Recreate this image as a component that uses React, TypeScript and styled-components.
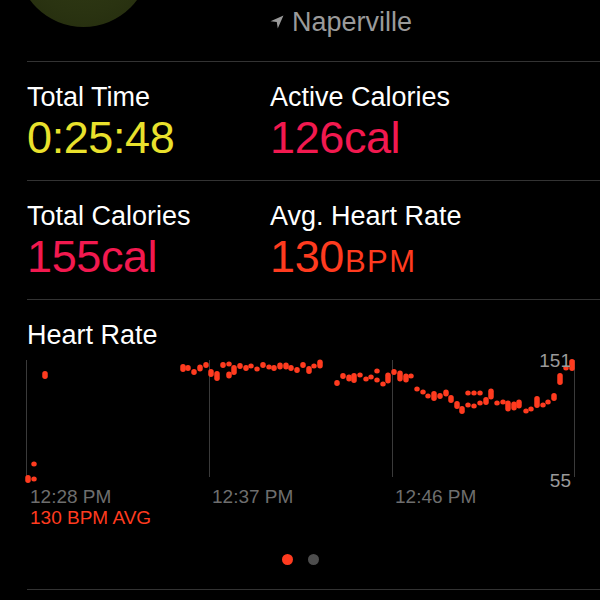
import React from "react";
import styled, { createGlobalStyle } from "styled-components";

const GlobalStyle = createGlobalStyle`
  html, body {
    margin: 0;
    padding: 0;
    background: #000;
  }
  body {
    font-family: "Liberation Sans", Arial, sans-serif;
  }
`;

const Screen = styled.div`
  width: 600px;
  height: 600px;
  overflow: hidden;
  background: #000;
  color: #fff;
  display: flex;
  flex-direction: column;
`;

const TopRow = styled.div`
  display: grid;
  grid-template-columns: 243px 1fr;
  align-items: start;
  height: 62px;
  box-sizing: border-box;
  margin-left: 27px;
  border-bottom: 1px solid #333;
`;

const MapThumb = styled.div`
  width: 133px;
  height: 133px;
  margin: -106px 0 0 -10px;
  border-radius: 50%;
  background: radial-gradient(circle at 50% 45%, #313b14 0%, #2a3311 60%, #232b0d 100%);
`;

const Location = styled.div`
  display: flex;
  align-items: center;
  gap: 8px;
  padding-top: 7px;
  font-size: 27px;
  line-height: 30px;
  color: #9a9a9a;
`;

const StatRow = styled.div`
  display: grid;
  grid-template-columns: 243px 1fr;
  padding: 20px 0 18px;
  margin-left: 27px;
  border-bottom: 1px solid #333;
`;

const Stat = styled.div`
  display: flex;
  flex-direction: column;
`;

const Label = styled.div`
  font-size: 27px;
  line-height: 30px;
  color: #fff;
  white-space: nowrap;
`;

const Value = styled.div<{ $color: string }>`
  margin-top: 2px;
  font-size: 45px;
  line-height: 48px;
  letter-spacing: -0.4px;
  color: ${(p) => p.$color};
  white-space: nowrap;
`;

const Unit = styled.span`
  font-size: 31px;
  line-height: 0;
  letter-spacing: 1.5px;
  margin-left: 1px;
`;

const HeartSection = styled.div`
  display: flex;
  flex-direction: column;
  padding-top: 20px;
`;

const Title = styled(Label)`
  padding-left: 27px;
`;

const ChartSvg = styled.svg`
  display: block;
  margin-top: 2px;
`;

const AvgText = styled.div`
  padding-left: 30px;
  font-size: 19px;
  line-height: 22px;
  color: #ff3b1f;
`;

const Pager = styled.div`
  display: flex;
  justify-content: center;
  gap: 15px;
  margin-top: 25px;
`;

const PageDot = styled.span<{ $active?: boolean }>`
  width: 11px;
  height: 11px;
  border-radius: 50%;
  background: ${(p) => (p.$active ? "#ff3b1f" : "#4d4d4d")};
`;

const BottomLine = styled.div`
  height: 1px;
  margin: 24px 0 0 27px;
  background: #333;
`;

// [x, y, h] in page pixels
const beats: number[][] = [
  [28, 479, 8], [34, 479, 5], [34, 464, 5], [45, 375, 8],
  [183, 368, 8], [188, 368, 6], [194, 372, 6], [200, 368, 7], [206, 365, 6],
  [211, 373, 8], [217, 376, 10], [223, 365, 6], [229, 375, 7], [229, 364, 5],
  [234, 370, 10], [240, 366, 6], [246, 368, 6], [251, 366, 5], [257, 369, 5],
  [263, 365, 6], [269, 367, 5], [274, 368, 6], [280, 366, 7], [286, 366, 7],
  [291, 368, 6], [297, 370, 6], [303, 365, 6], [309, 370, 8], [314, 366, 5],
  [320, 364, 9],
  [337, 383, 6], [343, 376, 6], [349, 378, 7], [354, 378, 10], [360, 375, 5],
  [366, 379, 5], [371, 377, 5], [377, 371, 5], [377, 380, 5], [383, 384, 5],
  [388, 378, 11], [394, 372, 6], [400, 376, 11], [406, 378, 9], [411, 376, 5],
  [417, 389, 5], [423, 392, 5], [428, 396, 5], [434, 396, 10], [440, 396, 6],
  [446, 393, 7], [451, 399, 8], [457, 405, 8], [462, 410, 8], [468, 393, 5],
  [468, 405, 5], [474, 393, 5], [474, 406, 5], [480, 393, 5], [480, 403, 5],
  [486, 401, 8], [491, 394, 11], [497, 403, 5], [503, 402, 5], [508, 406, 11],
  [514, 406, 9], [519, 404, 9], [526, 411, 5], [531, 409, 5], [537, 402, 12],
  [543, 405, 5], [548, 402, 5], [554, 397, 8], [560, 379, 12], [566, 368, 5],
  [572, 365, 12],
];

const CHART_TOP = 352;
const gridX = [26.5, 209.5, 392.5, 574.5];
const times = [
  { x: 30, t: "12:28 PM" },
  { x: 212, t: "12:37 PM" },
  { x: 395, t: "12:46 PM" },
];

function HeartChart() {
  return (
    <ChartSvg width={600} height={155} viewBox="0 0 600 155">
      {gridX.map((x) => (
        <line key={x} x1={x} x2={x} y1={8} y2={125} stroke="#3a3a3a" strokeWidth={1} />
      ))}
      {beats.map(([x, y, h], i) => (
        <rect
          key={i}
          x={x - 2.75}
          y={y - CHART_TOP - h / 2}
          width={5.5}
          height={h}
          rx={2.75}
          fill="#ff3b1f"
        />
      ))}
      <g fontFamily='"Liberation Sans", Arial, sans-serif' fontSize={19}>
        {times.map((t) => (
          <text key={t.t} x={t.x} y={151} fill="#6e6e6e">
            {t.t}
          </text>
        ))}
        <text x={571} y={15} textAnchor="end" fill="#9a9a9a">151</text>
        <text x={571} y={135} textAnchor="end" fill="#9a9a9a">55</text>
      </g>
    </ChartSvg>
  );
}

function LocationArrow() {
  return (
    <svg width="14" height="14" viewBox="0 0 13 13">
      <path d="M12.5 0.5 L0.5 5.8 L6.3 6.6 L7.2 12.5 Z" fill="#9a9a9a" />
    </svg>
  );
}

export default function App() {
  return (
    <Screen>
      <GlobalStyle />
      <TopRow>
        <MapThumb />
        <Location>
          <LocationArrow />
          Naperville
        </Location>
      </TopRow>

      <StatRow>
        <Stat>
          <Label>Total Time</Label>
          <Value $color="#e9e12c">0:25:48</Value>
        </Stat>
        <Stat>
          <Label>Active Calories</Label>
          <Value $color="#f2194f">126cal</Value>
        </Stat>
      </StatRow>

      <StatRow>
        <Stat>
          <Label>Total Calories</Label>
          <Value $color="#f2194f">155cal</Value>
        </Stat>
        <Stat>
          <Label>Avg. Heart Rate</Label>
          <Value $color="#ff3b1f">
            130<Unit>BPM</Unit>
          </Value>
        </Stat>
      </StatRow>

      <HeartSection>
        <Title>Heart Rate</Title>
        <HeartChart />
        <AvgText>130 BPM AVG</AvgText>
      </HeartSection>

      <Pager>
        <PageDot $active />
        <PageDot />
      </Pager>
      <BottomLine />
    </Screen>
  );
}
